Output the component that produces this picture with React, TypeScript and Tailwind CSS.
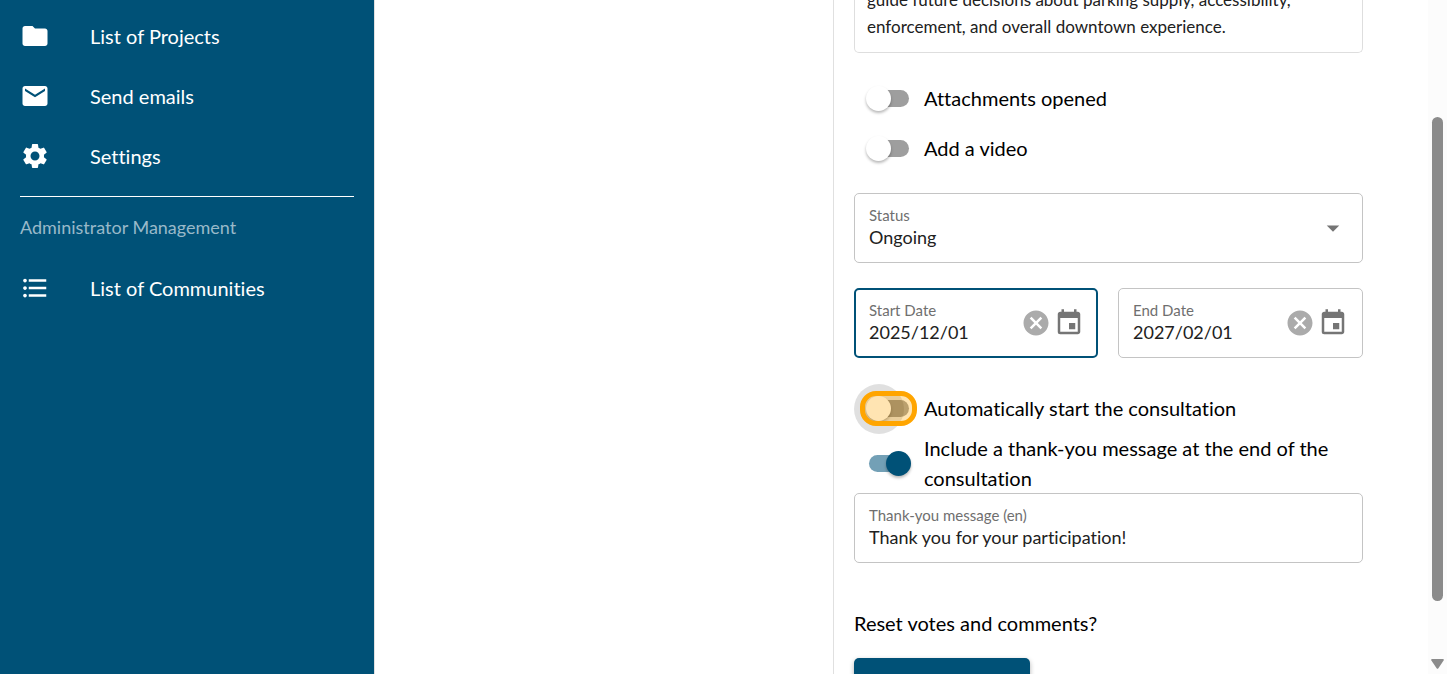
import { useState } from 'react';
import type { ReactNode } from 'react';
import clsx from 'clsx';
import {
  MdArrowDropDown,
  MdCancel,
  MdEvent,
  MdFolder,
  MdFormatListBulleted,
  MdMail,
  MdSettings,
} from 'react-icons/md';

interface NavItemProps {
  icon: ReactNode;
  label: string;
}

function NavItem({ icon, label }: NavItemProps) {
  return (
    <li>
      <a href="#" className="flex h-[60px] items-center gap-10 px-5 text-xl text-white">
        {icon}
        <span>{label}</span>
      </a>
    </li>
  );
}

interface SwitchProps {
  id: string;
  label: string;
  checked: boolean;
  highlighted?: boolean;
  onChange: (checked: boolean) => void;
}

function Switch({ id, label, checked, highlighted, onChange }: SwitchProps) {
  return (
    <div className="flex min-h-[50px] items-center">
      <div className="relative flex h-[25px] w-[70px] shrink-0 items-center pl-[15px]">
        <span className={clsx('h-[17px] w-10 rounded-full', checked ? 'bg-[#73a0b6]' : 'bg-[#9e9e9e]')} />
        {/* Focus ripple behind the thumb */}
        {highlighted && <span className="absolute -top-3 left-0 size-[50px] rounded-full bg-black/12" />}
        <span
          className={clsx(
            'absolute top-0 size-[25px] rounded-full shadow-[0_2px_3px_rgba(0,0,0,0.28)]',
            checked ? 'left-8 bg-[#005177]' : 'left-3 bg-white'
          )}
        />
        {highlighted && (
          <span className="absolute -top-[5px] left-1.5 h-[35px] w-[57px] rounded-2xl border-5 border-[#ffa500] bg-[#ffa500]/30" />
        )}
        <input
          id={id}
          type="checkbox"
          role="switch"
          checked={checked}
          onChange={(e) => onChange(e.target.checked)}
          className="absolute inset-0 cursor-pointer opacity-0"
        />
      </div>
      <label htmlFor={id} className="cursor-pointer text-xl leading-[30px]">{label}</label>
    </div>
  );
}

const fieldBox = 'flex h-[70px] min-w-0 items-center rounded-[5px] border';
const fieldText = 'flex min-w-0 flex-1 flex-col pb-1';
const fieldLabel = 'text-[15px] leading-[22px] text-[#6f6f6f]';
const fieldInput = 'w-full appearance-none bg-transparent text-lg leading-[22px] text-[#212121] outline-none';

interface DateFieldProps {
  id: string;
  label: string;
  value: string;
  active?: boolean;
  onChange: (value: string) => void;
}

function DateField({ id, label, value, active, onChange }: DateFieldProps) {
  return (
    <div className={clsx(fieldBox, active ? 'border-2 border-[#005177] pr-3 pl-[13px]' : 'border-[#c4c4c4] px-3.5')}>
      <div className={fieldText}>
        <label htmlFor={id} className={fieldLabel}>{label}</label>
        <input id={id} type="text" value={value} onChange={(e) => onChange(e.target.value)} className={fieldInput} />
      </div>
      <button type="button" aria-label={`Clear ${label}`} onClick={() => onChange('')} className="text-[#ababab]">
        <MdCancel className="size-[30px]" />
      </button>
      <button type="button" aria-label={`Choose ${label}`} className="ml-[3px] text-[#757575]">
        <MdEvent className="size-[30px]" />
      </button>
    </div>
  );
}

function App() {
  const [attachments, setAttachments] = useState(false);
  const [video, setVideo] = useState(false);
  const [autoStart, setAutoStart] = useState(false);
  const [thankYou, setThankYou] = useState(true);
  const [status, setStatus] = useState('Ongoing');
  const [startDate, setStartDate] = useState('2025/12/01');
  const [endDate, setEndDate] = useState('2027/02/01');
  const [message, setMessage] = useState('Thank you for your participation!');

  return (
    <div className="flex h-screen overflow-hidden bg-white font-['Lato',sans-serif] text-black [font-variant-ligatures:none]">
      {/* Sidebar */}
      <nav className="w-[375px] shrink-0 border-r border-[#e0e0e0] bg-[#005177] pt-1.5">
        <ul>
          <NavItem icon={<MdFolder className="size-[30px]" />} label="List of Projects" />
          <NavItem icon={<MdMail className="size-[30px]" />} label="Send emails" />
          <NavItem icon={<MdSettings className="size-[30px]" />} label="Settings" />
        </ul>
        <hr className="mx-5 mt-2.5 border-white" />
        <h2 className="px-5 pt-4 pb-[17px] text-lg text-[#99b9c9]">Administrator Management</h2>
        <ul>
          <NavItem icon={<MdFormatListBulleted className="size-[30px]" />} label="List of Communities" />
        </ul>
      </nav>

      <main className="grid min-w-0 flex-1 grid-cols-[458fr_595fr]">
        <section />
        <section className="h-screen overflow-hidden border-l border-[#e0e0e0] pr-[65px] pl-5">
          {/* End of the description, the rest is scrolled out of view */}
          <div className="flex h-[53px] flex-col justify-end overflow-hidden rounded-b-[5px] border-x border-b border-[#dedede] px-3 pb-3">
            <p className="text-[17px] leading-[27px] text-[#212121]">
              guide future decisions about parking supply, accessibility, enforcement, and overall downtown experience.
            </p>
          </div>

          <form>
            <div className="py-5">
              <Switch id="attachments" label="Attachments opened" checked={attachments} onChange={setAttachments} />
              <Switch id="video" label="Add a video" checked={video} onChange={setVideo} />
            </div>

            <div className={clsx(fieldBox, 'border-[#c4c4c4] px-3.5')}>
              <div className={fieldText}>
                <label htmlFor="status" className={fieldLabel}>Status</label>
                <select id="status" value={status} onChange={(e) => setStatus(e.target.value)} className={fieldInput}>
                  <option>Ongoing</option>
                </select>
              </div>
              <MdArrowDropDown className="pointer-events-none size-[30px] text-[#757575]" />
            </div>

            <div className="grid grid-cols-[244fr_245fr] gap-5 py-[25px]">
              <DateField id="start-date" label="Start Date" value={startDate} active onChange={setStartDate} />
              <DateField id="end-date" label="End Date" value={endDate} onChange={setEndDate} />
            </div>

            <Switch
              id="auto-start"
              label="Automatically start the consultation"
              checked={autoStart}
              highlighted
              onChange={setAutoStart}
            />
            <Switch
              id="thank-you"
              label="Include a thank-you message at the end of the consultation"
              checked={thankYou}
              onChange={setThankYou}
            />

            <div className={clsx(fieldBox, 'border-[#c4c4c4] px-3.5')}>
              <div className={fieldText}>
                <label htmlFor="message" className={fieldLabel}>Thank-you message (en)</label>
                <input
                  id="message"
                  type="text"
                  value={message}
                  onChange={(e) => setMessage(e.target.value)}
                  className={fieldInput}
                />
              </div>
            </div>

            <p className="pt-[45px] pb-5 text-xl leading-[30px]">Reset votes and comments?</p>
            <button
              type="button"
              aria-label="Reset"
              className="block h-[46px] w-44 rounded-[5px] bg-[#005177] shadow-[0_2px_5px_rgba(0,0,0,0.3)]"
            />
          </form>
        </section>
      </main>

      {/* Scrollbar */}
      <div className="flex w-[19px] shrink-0 flex-col items-center bg-[#fcfcfc] pt-[117px] pb-[5px]">
        <div className="w-[11px] flex-1 rounded-full bg-[#8b8b8b]" />
        <svg viewBox="0 0 13 10" className="mt-[58px] h-2.5 w-[13px] fill-[#8b8b8b]">
          <path d="M1.2 0h10.6q1.6 0.3 0.8 1.6L7.4 9.2q-0.9 1-1.8 0L0.4 1.6Q-0.4 0.3 1.2 0z" />
        </svg>
      </div>
    </div>
  );
}

export default App;
